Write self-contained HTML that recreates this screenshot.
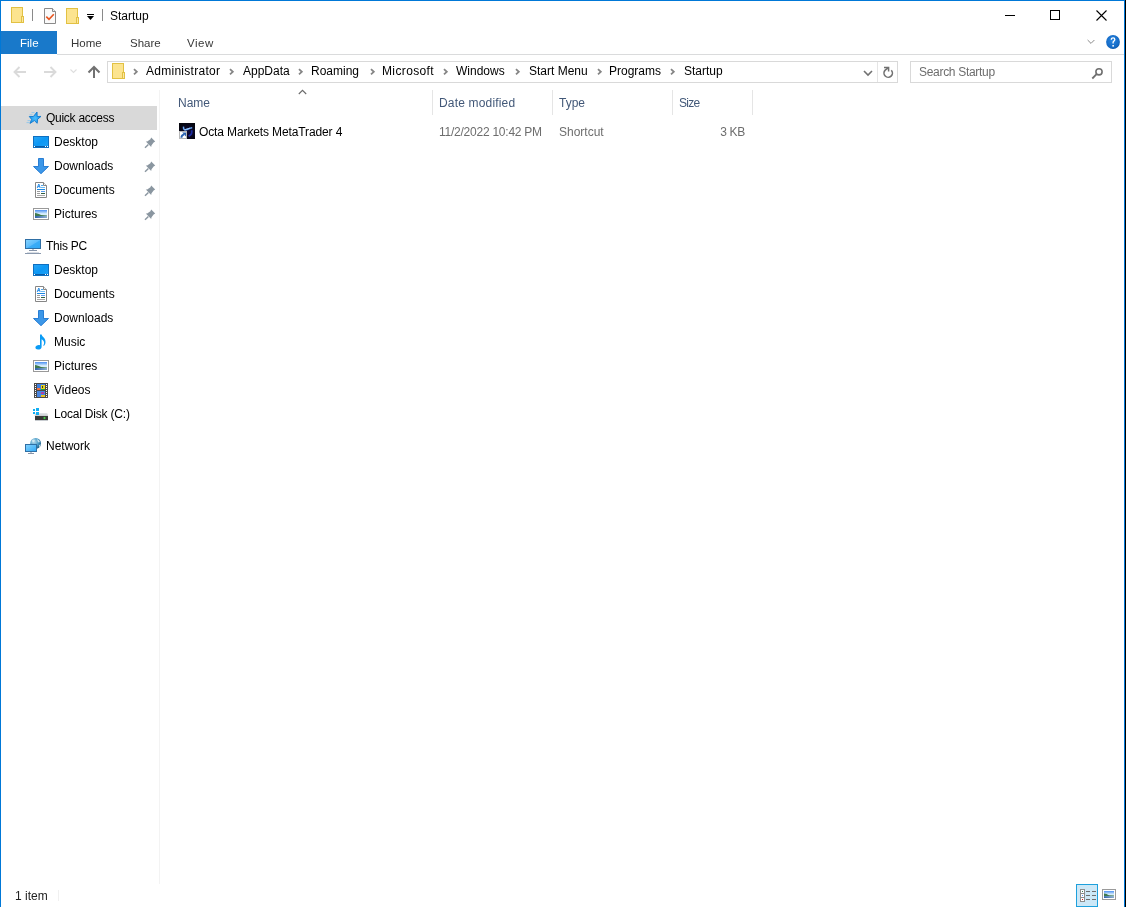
<!DOCTYPE html>
<html><head><meta charset="utf-8">
<style>
*{margin:0;padding:0;box-sizing:border-box}
html,body{width:1126px;height:907px;overflow:hidden;background:#fff}
body{position:relative;font-family:"Liberation Sans",sans-serif;font-size:12px;color:#000}
.a{position:absolute}
.t{position:absolute;white-space:nowrap;font-size:12px;line-height:14px;will-change:transform}
.s{font-size:11.5px}
svg{position:absolute;overflow:visible}
</style></head><body>
<!-- window borders -->
<div class="a" style="left:0;top:0;width:1125px;height:1px;background:#0078d7"></div>
<div class="a" style="left:0;top:0;width:1px;height:907px;background:#0078d7"></div>
<div class="a" style="left:1124px;top:0;width:1px;height:907px;background:#0078d7"></div>
<div class="a" style="left:1125px;top:0;width:1px;height:907px;background:#000"></div>

<!-- title bar -->
<div class="t" style="left:110px;top:9px">Startup</div>

<!-- ribbon tabs -->
<div class="a" style="left:1px;top:31px;width:56px;height:23px;background:#1979ca"></div>
<div class="t s" style="left:20px;top:36px;color:#fff">File</div>
<div class="t s" style="left:71px;top:36px;color:#383838">Home</div>
<div class="t s" style="left:130px;top:36px;color:#383838">Share</div>
<div class="t s" style="left:187px;top:36px;color:#383838;letter-spacing:0.5px">View</div>
<div class="a" style="left:57px;top:54px;width:1067px;height:1px;background:#dadbdc"></div>

<!-- address bar -->
<div class="a" style="left:107px;top:61px;width:791px;height:22px;border:1px solid #d9d9d9"></div>
<div class="a" style="left:877px;top:62px;width:1px;height:20px;background:#e5e5e5"></div>
<div class="t" style="left:146px;top:64px;letter-spacing:0.27px">Administrator</div>
<div class="t" style="left:243px;top:64px">AppData</div>
<div class="t" style="left:311px;top:64px">Roaming</div>
<div class="t" style="left:382px;top:64px;letter-spacing:0.37px">Microsoft</div>
<div class="t" style="left:456px;top:64px">Windows</div>
<div class="t" style="left:529px;top:64px">Start Menu</div>
<div class="t" style="left:609px;top:64px">Programs</div>
<div class="t" style="left:684px;top:64px">Startup</div>

<!-- search -->
<div class="a" style="left:910px;top:61px;width:202px;height:22px;border:1px solid #d9d9d9"></div>
<div class="t" style="left:919px;top:65px;color:#6d6d6d;letter-spacing:-0.3px">Search Startup</div>

<!-- sidebar -->
<div class="a" style="left:1px;top:106px;width:156px;height:24px;background:#d9d9d9"></div>
<div class="a" style="left:159px;top:90px;width:1px;height:794px;background:#f3f3f3"></div>
<div class="t" style="left:46px;top:111px;letter-spacing:-0.27px">Quick access</div>
<div class="t" style="left:54px;top:135px">Desktop</div>
<div class="t" style="left:54px;top:159px">Downloads</div>
<div class="t" style="left:54px;top:183px">Documents</div>
<div class="t" style="left:54px;top:207px">Pictures</div>
<div class="t" style="left:46px;top:239px;letter-spacing:-0.25px">This PC</div>
<div class="t" style="left:54px;top:263px">Desktop</div>
<div class="t" style="left:54px;top:287px">Documents</div>
<div class="t" style="left:54px;top:311px">Downloads</div>
<div class="t" style="left:54px;top:335px">Music</div>
<div class="t" style="left:54px;top:359px">Pictures</div>
<div class="t" style="left:54px;top:383px">Videos</div>
<div class="t" style="left:54px;top:407px;letter-spacing:-0.2px">Local Disk (C:)</div>
<div class="t" style="left:46px;top:439px">Network</div>

<!-- headers -->
<div class="t" style="left:178px;top:96px;color:#425878">Name</div>
<div class="t" style="left:439px;top:96px;color:#425878;letter-spacing:0.17px">Date modified</div>
<div class="t" style="left:559px;top:96px;color:#425878">Type</div>
<div class="t" style="left:679px;top:96px;color:#425878;letter-spacing:-0.75px">Size</div>
<div class="a" style="left:432px;top:90px;width:1px;height:25px;background:#e5e5e5"></div>
<div class="a" style="left:552px;top:90px;width:1px;height:25px;background:#e5e5e5"></div>
<div class="a" style="left:672px;top:90px;width:1px;height:25px;background:#e5e5e5"></div>
<div class="a" style="left:752px;top:90px;width:1px;height:25px;background:#e5e5e5"></div>

<!-- row -->
<div class="t" style="left:199px;top:125px;letter-spacing:-0.12px">Octa Markets MetaTrader 4</div>
<div class="t" style="left:439px;top:125px;color:#6d6d6d;letter-spacing:-0.24px">11/2/2022 10:42 PM</div>
<div class="t" style="left:559px;top:125px;color:#6d6d6d">Shortcut</div>
<div class="t" style="left:700px;top:125px;width:45px;text-align:right;color:#6d6d6d;letter-spacing:-0.3px">3 KB</div>

<!-- status -->
<div class="t" style="left:15px;top:889px;color:#222">1 item</div>
<div class="a" style="left:58px;top:890px;width:1px;height:11px;background:#f0f0f0"></div>

<!-- ===== ICONS ===== -->
<!-- title folder 1 -->
<svg class="ic" style="left:11px;top:7px" width="14" height="16" viewBox="0 0 14 16" shape-rendering="crispEdges">
<rect x="0.5" y="0.5" width="11" height="15" fill="#fce48f" stroke="#e2c143"/>
<rect x="10.5" y="9.5" width="2" height="6" fill="#fbe7a3" stroke="#e2c143"/>
</svg>
<div class="a" style="left:32px;top:9px;width:1px;height:12px;background:#8a8a8a"></div>
<!-- properties doc -->
<svg class="ic" style="left:44px;top:8px" width="13" height="16" viewBox="0 0 13 16">
<path d="M0.5 0.5 H8.5 L11.5 3.5 V15.5 H0.5 Z" fill="#fafafa" stroke="#8a8a8a" stroke-width="1"/>
<path d="M8.5 0.5 V3.5 H11.5" fill="#eee" stroke="#8a8a8a" stroke-width="1"/>
<path d="M2.3 8.6 L5 11.3 L9.8 6.2" fill="none" stroke="#e8541e" stroke-width="1.6"/>
</svg>
<!-- title folder 2 -->
<svg class="ic" style="left:66px;top:8px" width="14" height="16" viewBox="0 0 14 16" shape-rendering="crispEdges">
<rect x="0.5" y="0.5" width="11" height="15" fill="#fce48f" stroke="#e2c143"/>
<rect x="10.5" y="9.5" width="2" height="6" fill="#fbe7a3" stroke="#e2c143"/>
</svg>
<!-- qat dropdown -->
<div class="a" style="left:87px;top:14px;width:7px;height:1px;background:#000"></div>
<svg class="ic" style="left:87px;top:16px" width="7" height="4" viewBox="0 0 7 4"><path d="M0 0 H7 L3.5 4 Z" fill="#000"/></svg>
<div class="a" style="left:102px;top:9px;width:1px;height:12px;background:#8a8a8a"></div>

<!-- window controls -->
<div class="a" style="left:1005px;top:15px;width:10px;height:1px;background:#000"></div>
<div class="a" style="left:1050px;top:10px;width:10px;height:10px;border:1px solid #000"></div>
<svg class="ic" style="left:1096px;top:10px" width="11" height="11" viewBox="0 0 11 11"><path d="M0.5 0.5 L10.5 10.5 M10.5 0.5 L0.5 10.5" stroke="#000" stroke-width="1.1" fill="none"/></svg>

<!-- ribbon right -->
<svg class="ic" style="left:1087px;top:39px" width="9" height="6" viewBox="0 0 9 6"><path d="M0.6 1 L4 4.4 L7.4 1" stroke="#8a8a8a" stroke-width="1" fill="none"/></svg>
<svg class="ic" style="left:1106px;top:35px" width="14" height="14" viewBox="0 0 14 14">
<defs><radialGradient id="hg" cx="0.45" cy="0.4" r="0.6"><stop offset="0" stop-color="#2b86e0"/><stop offset="0.85" stop-color="#1268c4"/><stop offset="1" stop-color="#0b55a6"/></radialGradient></defs>
<circle cx="7" cy="7" r="6.9" fill="url(#hg)"/>
<path d="M5.3 4.7 C5.3 3.5 6.1 2.9 7.1 2.9 C8.1 2.9 8.8 3.6 8.8 4.5 C8.8 5.7 7.4 6 7.1 7.2 V8.4" stroke="#fff" stroke-width="1.3" fill="none"/>
<rect x="6.4" y="10" width="1.5" height="1.6" fill="#fff"/>
</svg>

<!-- nav arrows -->
<svg class="ic" style="left:13px;top:66px" width="14" height="12" viewBox="0 0 14 12"><path d="M13 6 H2 M6.5 1 L1.5 6 L6.5 11" stroke="#dadada" stroke-width="1.9" fill="none"/></svg>
<svg class="ic" style="left:43px;top:66px" width="14" height="12" viewBox="0 0 14 12"><path d="M1 6 H12 M7.5 1 L12.5 6 L7.5 11" stroke="#dadada" stroke-width="1.9" fill="none"/></svg>
<svg class="ic" style="left:70px;top:69px" width="7" height="5" viewBox="0 0 7 5"><path d="M0.5 0.5 L3.5 3.5 L6.5 0.5" stroke="#dedede" stroke-width="1.1" fill="none"/></svg>
<svg class="ic" style="left:87px;top:65px" width="14" height="14" viewBox="0 0 14 14"><path d="M7 2 V13 M1.5 7.5 L7 2 L12.5 7.5" stroke="#717171" stroke-width="2" fill="none"/></svg>

<!-- address folder -->
<svg class="ic" style="left:112px;top:63px" width="14" height="16" viewBox="0 0 14 16" shape-rendering="crispEdges">
<rect x="0.5" y="0.5" width="11" height="15" fill="#fce48f" stroke="#e2c143"/>
<rect x="10.5" y="9.5" width="2" height="6" fill="#fbe7a3" stroke="#e2c143"/>
</svg>
<svg class="ic" style="left:133px;top:68px" width="6" height="8" viewBox="0 0 6 8"><path d="M1 1.2 L3.8 3.8 L1 6.4" stroke="#858585" stroke-width="1.8" fill="none"/></svg>
<svg class="ic" style="left:229px;top:68px" width="6" height="8" viewBox="0 0 6 8"><path d="M1 1.2 L3.8 3.8 L1 6.4" stroke="#858585" stroke-width="1.8" fill="none"/></svg>
<svg class="ic" style="left:298px;top:68px" width="6" height="8" viewBox="0 0 6 8"><path d="M1 1.2 L3.8 3.8 L1 6.4" stroke="#858585" stroke-width="1.8" fill="none"/></svg>
<svg class="ic" style="left:370px;top:68px" width="6" height="8" viewBox="0 0 6 8"><path d="M1 1.2 L3.8 3.8 L1 6.4" stroke="#858585" stroke-width="1.8" fill="none"/></svg>
<svg class="ic" style="left:443px;top:68px" width="6" height="8" viewBox="0 0 6 8"><path d="M1 1.2 L3.8 3.8 L1 6.4" stroke="#858585" stroke-width="1.8" fill="none"/></svg>
<svg class="ic" style="left:515px;top:68px" width="6" height="8" viewBox="0 0 6 8"><path d="M1 1.2 L3.8 3.8 L1 6.4" stroke="#858585" stroke-width="1.8" fill="none"/></svg>
<svg class="ic" style="left:597px;top:68px" width="6" height="8" viewBox="0 0 6 8"><path d="M1 1.2 L3.8 3.8 L1 6.4" stroke="#858585" stroke-width="1.8" fill="none"/></svg>
<svg class="ic" style="left:670px;top:68px" width="6" height="8" viewBox="0 0 6 8"><path d="M1 1.2 L3.8 3.8 L1 6.4" stroke="#858585" stroke-width="1.8" fill="none"/></svg>

<!-- addr dropdown + refresh -->
<svg class="ic" style="left:863px;top:70px" width="10" height="7" viewBox="0 0 10 7"><path d="M1 1 L5 5 L9 1" stroke="#717171" stroke-width="1.6" fill="none"/></svg>
<svg class="ic" style="left:882px;top:66px" width="12" height="13" viewBox="0 0 12 13">
<path d="M9.3 4.2 A4.2 4.2 0 1 1 3.2 4.1 L6.4 1.6" stroke="#717171" stroke-width="1.6" fill="none"/>
<path d="M2 1.5 H6.6 V5.6" stroke="#717171" stroke-width="1.5" fill="none"/>
</svg>
<!-- search icon -->
<svg class="ic" style="left:1090px;top:67px" width="14" height="14" viewBox="0 0 14 14">
<circle cx="9" cy="4.8" r="3.1" stroke="#6f6f6f" stroke-width="1.6" fill="none"/>
<path d="M6.6 7.2 L2.3 11.5" stroke="#6f6f6f" stroke-width="1.8" fill="none"/>
</svg>

<!-- ===== SIDEBAR ICONS ===== -->
<!-- quick access star -->
<svg class="ic" style="left:25px;top:110px" width="18" height="16" viewBox="0 0 18 16">
<path d="M1.5 12.6 H4.5 M2.5 10.6 H5.2 M4.5 4.8 H7.5 M6.5 2.6 H9.5" stroke="#7cc0f0" stroke-width="0.9" fill="none" opacity="0.8"/>
<defs><radialGradient id="stg" cx="0.5" cy="0.55" r="0.5"><stop offset="0" stop-color="#4cbcfb"/><stop offset="1" stop-color="#1a98ec"/></radialGradient></defs>
<path d="M12 2 L12.2 6.6 L16 6.4 L12.6 9.2 L12.2 13.3 L9.4 10.6 L5 13.4 L6.6 9.4 L4.3 6.5 L8.4 6.5 Z" fill="url(#stg)" stroke="#0d78cf" stroke-width="0.9" stroke-linejoin="round"/>
</svg>
<svg class="ic" style="left:33px;top:136px" width="16" height="12" viewBox="0 0 16 12" shape-rendering="crispEdges">
<defs><linearGradient id="dg136" x1="0" y1="0" x2="1" y2="1"><stop offset="0" stop-color="#2aa6f6"/><stop offset="0.5" stop-color="#0c97f4"/><stop offset="1" stop-color="#22a2f5"/></linearGradient></defs>
<rect x="0.5" y="0.5" width="15" height="11" fill="url(#dg136)" stroke="#0f6fc0"/>
<rect x="1" y="10" width="14" height="1" fill="#0a5ca6"/>
<rect x="1" y="10" width="1" height="1" fill="#fff"/><rect x="12" y="10" width="1" height="1" fill="#fff"/><rect x="14" y="10" width="1" height="1" fill="#fff"/>
</svg>
<svg class="ic" style="left:33px;top:158px" width="16" height="16" viewBox="0 0 16 16">
<path d="M5.5 0.5 H10.5 V8.5 H15.5 L8 15.7 L0.5 8.5 H5.5 Z" fill="#3c97e8" stroke="#1c75d0" stroke-width="0.9" stroke-linejoin="miter"/>
</svg>
<svg class="ic" style="left:35px;top:182px" width="12" height="16" viewBox="0 0 12 16">
<path d="M0.5 0.5 H8.5 L11.5 3.5 V15.5 H0.5 Z" fill="#fff" stroke="#868686"/>
<path d="M8.5 0.5 V3.5 H11.5" fill="#f4f4f4" stroke="#868686"/>
<path d="M2.2 6 L3.8 2 L5.2 6 M2.8 4.6 H4.8" stroke="#2a8ee8" stroke-width="1" fill="none"/>
<rect x="6" y="3" width="2" height="1" fill="#4aa6f0"/>
<rect x="6" y="5" width="4" height="1" fill="#6cbcf4"/>
<rect x="2" y="7" width="8" height="1" fill="#1d87e0"/>
<rect x="2" y="9" width="3" height="1" fill="#9a9a9a"/><rect x="2" y="11" width="3" height="1" fill="#9a9a9a"/>
<rect x="6" y="9" width="4" height="1" fill="#5a9cf0"/><rect x="6" y="11" width="4" height="1" fill="#2f5f3f"/>
<rect x="2" y="13" width="8" height="1" fill="#a8a8a8"/>
</svg>
<svg class="ic" style="left:33px;top:208px" width="16" height="12" viewBox="0 0 16 12">
<defs><linearGradient id="sk208" x1="0" y1="0" x2="0" y2="1"><stop offset="0" stop-color="#4a8ff2"/><stop offset="0.45" stop-color="#d4ebfb"/><stop offset="1" stop-color="#e8f4fc"/></linearGradient>
<linearGradient id="wt208" x1="0" y1="0" x2="1" y2="0"><stop offset="0" stop-color="#2f62a8"/><stop offset="1" stop-color="#8fb0d0"/></linearGradient></defs>
<rect x="0.5" y="0.5" width="15" height="11" fill="#fff" stroke="#999" shape-rendering="crispEdges"/>
<rect x="2" y="2" width="12" height="8" fill="url(#sk208)"/>
<path d="M2 5 C4 5 6 6 8 7 L14 7.4 V8 H2 Z" fill="#3f7a4f"/>
<rect x="2" y="8" width="12" height="2" fill="url(#wt208)"/>
</svg>
<svg class="ic" style="left:144px;top:137px" width="12" height="12" viewBox="0 0 12 12">
<path d="M7.2 0.6 L11.2 4.6 L9.6 5.4 L7.4 8.6 L7.2 10 L1.8 4.6 L3.2 4.4 L6.4 2.2 Z" fill="#8a96a0"/>
<path d="M4.4 7.4 L1 10.8" stroke="#8a96a0" stroke-width="1.4"/>
</svg>
<svg class="ic" style="left:144px;top:161px" width="12" height="12" viewBox="0 0 12 12">
<path d="M7.2 0.6 L11.2 4.6 L9.6 5.4 L7.4 8.6 L7.2 10 L1.8 4.6 L3.2 4.4 L6.4 2.2 Z" fill="#8a96a0"/>
<path d="M4.4 7.4 L1 10.8" stroke="#8a96a0" stroke-width="1.4"/>
</svg>
<svg class="ic" style="left:144px;top:185px" width="12" height="12" viewBox="0 0 12 12">
<path d="M7.2 0.6 L11.2 4.6 L9.6 5.4 L7.4 8.6 L7.2 10 L1.8 4.6 L3.2 4.4 L6.4 2.2 Z" fill="#8a96a0"/>
<path d="M4.4 7.4 L1 10.8" stroke="#8a96a0" stroke-width="1.4"/>
</svg>
<svg class="ic" style="left:144px;top:209px" width="12" height="12" viewBox="0 0 12 12">
<path d="M7.2 0.6 L11.2 4.6 L9.6 5.4 L7.4 8.6 L7.2 10 L1.8 4.6 L3.2 4.4 L6.4 2.2 Z" fill="#8a96a0"/>
<path d="M4.4 7.4 L1 10.8" stroke="#8a96a0" stroke-width="1.4"/>
</svg>

<!-- This PC -->
<svg class="ic" style="left:25px;top:239px" width="16" height="16" viewBox="0 0 16 16" shape-rendering="crispEdges">
<defs><linearGradient id="pcg" x1="0" y1="0" x2="1" y2="1"><stop offset="0" stop-color="#86d4ff"/><stop offset="0.5" stop-color="#5ebcfb"/><stop offset="0.55" stop-color="#3aacf7"/><stop offset="1" stop-color="#30a8f5"/></linearGradient></defs>
<rect x="0.5" y="0.5" width="15" height="9" fill="url(#pcg)" stroke="#2f6fa5"/>
<rect x="7" y="10" width="2" height="1" fill="#b8c4d0"/>
<rect x="4" y="11" width="8" height="1" fill="#8795aa"/>
<rect x="0" y="14" width="16" height="1" fill="#8a99ae"/>
<rect x="2" y="13" width="12" height="1" fill="#d8dde4"/>
</svg>
<svg class="ic" style="left:33px;top:264px" width="16" height="12" viewBox="0 0 16 12" shape-rendering="crispEdges">
<defs><linearGradient id="dg264" x1="0" y1="0" x2="1" y2="1"><stop offset="0" stop-color="#2aa6f6"/><stop offset="0.5" stop-color="#0c97f4"/><stop offset="1" stop-color="#22a2f5"/></linearGradient></defs>
<rect x="0.5" y="0.5" width="15" height="11" fill="url(#dg264)" stroke="#0f6fc0"/>
<rect x="1" y="10" width="14" height="1" fill="#0a5ca6"/>
<rect x="1" y="10" width="1" height="1" fill="#fff"/><rect x="12" y="10" width="1" height="1" fill="#fff"/><rect x="14" y="10" width="1" height="1" fill="#fff"/>
</svg>
<svg class="ic" style="left:35px;top:286px" width="12" height="16" viewBox="0 0 12 16">
<path d="M0.5 0.5 H8.5 L11.5 3.5 V15.5 H0.5 Z" fill="#fff" stroke="#868686"/>
<path d="M8.5 0.5 V3.5 H11.5" fill="#f4f4f4" stroke="#868686"/>
<path d="M2.2 6 L3.8 2 L5.2 6 M2.8 4.6 H4.8" stroke="#2a8ee8" stroke-width="1" fill="none"/>
<rect x="6" y="3" width="2" height="1" fill="#4aa6f0"/>
<rect x="6" y="5" width="4" height="1" fill="#6cbcf4"/>
<rect x="2" y="7" width="8" height="1" fill="#1d87e0"/>
<rect x="2" y="9" width="3" height="1" fill="#9a9a9a"/><rect x="2" y="11" width="3" height="1" fill="#9a9a9a"/>
<rect x="6" y="9" width="4" height="1" fill="#5a9cf0"/><rect x="6" y="11" width="4" height="1" fill="#2f5f3f"/>
<rect x="2" y="13" width="8" height="1" fill="#a8a8a8"/>
</svg>
<svg class="ic" style="left:33px;top:310px" width="16" height="16" viewBox="0 0 16 16">
<path d="M5.5 0.5 H10.5 V8.5 H15.5 L8 15.7 L0.5 8.5 H5.5 Z" fill="#3c97e8" stroke="#1c75d0" stroke-width="0.9" stroke-linejoin="miter"/>
</svg>

<!-- Music -->
<svg class="ic" style="left:35px;top:334px" width="11" height="16" viewBox="0 0 11 16">
<path d="M5 0.5 H6.6 L7.2 2 C9 3.6 10.5 5 10.5 8 C10.5 10 9.6 11.5 8.6 12 L8.4 11.2 C9.2 10.2 9.3 9 8.9 7.8 C8.5 6.6 7.6 5.8 6.6 5.2 V13 C6.6 14.6 5 15.6 3 15.6 C1.4 15.6 0.4 14.8 0.4 13.6 C0.4 12 2.2 11 3.8 11 C4.2 11 4.6 11.1 5 11.2 Z" fill="#0a9bf5"/>
</svg>
<svg class="ic" style="left:33px;top:360px" width="16" height="12" viewBox="0 0 16 12">
<defs><linearGradient id="sk360" x1="0" y1="0" x2="0" y2="1"><stop offset="0" stop-color="#4a8ff2"/><stop offset="0.45" stop-color="#d4ebfb"/><stop offset="1" stop-color="#e8f4fc"/></linearGradient>
<linearGradient id="wt360" x1="0" y1="0" x2="1" y2="0"><stop offset="0" stop-color="#2f62a8"/><stop offset="1" stop-color="#8fb0d0"/></linearGradient></defs>
<rect x="0.5" y="0.5" width="15" height="11" fill="#fff" stroke="#999" shape-rendering="crispEdges"/>
<rect x="2" y="2" width="12" height="8" fill="url(#sk360)"/>
<path d="M2 5 C4 5 6 6 8 7 L14 7.4 V8 H2 Z" fill="#3f7a4f"/>
<rect x="2" y="8" width="12" height="2" fill="url(#wt360)"/>
</svg>

<!-- Videos -->
<svg class="ic" style="left:34px;top:383px" width="14" height="15" viewBox="0 0 14 15" shape-rendering="crispEdges">
<rect x="0" y="0" width="14" height="15" fill="#4a4a4a"/>
<rect x="1" y="1" width="1" height="1" fill="#fff"/><rect x="1" y="3" width="1" height="1" fill="#fff"/><rect x="1" y="5" width="1" height="1" fill="#fff"/><rect x="1" y="7" width="1" height="1" fill="#fff"/><rect x="1" y="9" width="1" height="1" fill="#fff"/><rect x="1" y="11" width="1" height="1" fill="#fff"/><rect x="1" y="13" width="1" height="1" fill="#fff"/>
<rect x="12" y="1" width="1" height="1" fill="#fff"/><rect x="12" y="3" width="1" height="1" fill="#fff"/><rect x="12" y="5" width="1" height="1" fill="#fff"/><rect x="12" y="7" width="1" height="1" fill="#fff"/><rect x="12" y="9" width="1" height="1" fill="#fff"/><rect x="12" y="11" width="1" height="1" fill="#fff"/><rect x="12" y="13" width="1" height="1" fill="#fff"/>
<rect x="3" y="1" width="8" height="6" fill="#3d7fe0"/>
<rect x="3" y="8" width="8" height="6" fill="#4a86e0"/>
<rect x="7" y="2" width="4" height="4" fill="#e8d020"/><rect x="8" y="3" width="1" height="2" fill="#333"/>
<rect x="3" y="5" width="3" height="2" fill="#f07040"/><rect x="7" y="6" width="4" height="1" fill="#20a040"/>
<rect x="7" y="9" width="3" height="2" fill="#b040a0"/><rect x="7" y="12" width="4" height="2" fill="#e8c020"/>
</svg>
<!-- Local disk -->
<svg class="ic" style="left:33px;top:408px" width="16" height="14" viewBox="0 0 16 14">
<defs><linearGradient id="dtop" x1="0" y1="0" x2="0" y2="1"><stop offset="0" stop-color="#e4e6ea"/><stop offset="1" stop-color="#c8ccd0"/></linearGradient></defs>
<path d="M3 5 H13.4 Q14.6 5 14.8 6.4 L15 8 H1.6 L1.8 6.4 Q2 5 3 5 Z" fill="url(#dtop)"/>
<rect x="2" y="8" width="13" height="4" fill="#383838" shape-rendering="crispEdges"/>
<rect x="2" y="12" width="13" height="1" fill="#c8ccd0" shape-rendering="crispEdges"/>
<circle cx="11.5" cy="10" r="1.3" fill="#40e840" opacity="0.55"/>
<rect x="11" y="9.5" width="1" height="1" fill="#50ff50"/>
<g shape-rendering="crispEdges" fill="#12aef2">
<rect x="0" y="1" width="2" height="2"/><rect x="3" y="0" width="3" height="3"/>
<rect x="0" y="4" width="2" height="2"/><rect x="3" y="4" width="3" height="3"/>
</g>
</svg>
<!-- Network -->
<svg class="ic" style="left:25px;top:438px" width="16" height="16" viewBox="0 0 16 16">
<defs><radialGradient id="glb" cx="0.35" cy="0.35" r="0.7"><stop offset="0" stop-color="#b8dcec"/><stop offset="0.6" stop-color="#4a9cc8"/><stop offset="1" stop-color="#1f5f88"/></radialGradient>
<linearGradient id="ng" x1="0" y1="0" x2="1" y2="1"><stop offset="0" stop-color="#86d4ff"/><stop offset="1" stop-color="#30a8f5"/></linearGradient></defs>
<circle cx="10.6" cy="5.4" r="5.4" fill="url(#glb)"/>
<path d="M7 2 Q9 0.8 10 2 L9 4 L7.5 4.5 Z M12 1 Q14.5 2 15 4 L13.5 4.5 L12.5 3 Z M14 7 L15.6 6.5 Q15.2 8.5 14 9.5 Z" fill="#d8ecf4" opacity="0.85"/>
<rect x="0.5" y="6.5" width="11" height="7" fill="url(#ng)" stroke="#2f6fa5" shape-rendering="crispEdges"/>
<rect x="3" y="15" width="6" height="1" fill="#8795aa" shape-rendering="crispEdges"/>
<rect x="5" y="14" width="2" height="1" fill="#c0c8d4" shape-rendering="crispEdges"/>
</svg>

<!-- sort arrow -->
<svg class="ic" style="left:298px;top:89px" width="10" height="6" viewBox="0 0 10 6"><path d="M0.8 5 L4.5 1.3 L8.2 5" stroke="#6a6a6a" stroke-width="1.1" fill="none"/></svg>

<!-- shortcut icon -->
<svg class="ic" style="left:179px;top:123px" width="16" height="16" viewBox="0 0 16 16">
<defs><radialGradient id="sg" cx="0.55" cy="0.55" r="0.6"><stop offset="0" stop-color="#0c0a3a"/><stop offset="1" stop-color="#06060e"/></radialGradient>
<filter id="glw" x="-50%" y="-50%" width="200%" height="200%"><feGaussianBlur stdDeviation="0.5"/></filter></defs>
<rect x="0" y="0" width="16" height="16" fill="url(#sg)"/>
<path d="M12.6 7.2 C13.2 9.6 12.4 12 9.6 13.2" stroke="#2436c0" stroke-width="1.8" fill="none" filter="url(#glw)" opacity="0.8"/>
<path d="M4.6 3.6 C4.2 5.6 5 7.4 7 6.8 C9 6.2 11 5 13.2 4.8" stroke="#6aaaf6" stroke-width="1.5" fill="none" filter="url(#glw)"/>
<path d="M5.5 6.8 C7.5 6.2 9 5.6 11 5.1" stroke="#9cc8ff" stroke-width="0.9" fill="none"/>
<rect x="0.5" y="8.5" width="7" height="7" fill="#fff" stroke="#b8b8b8" shape-rendering="crispEdges"/>
<path d="M2.4 14.8 C2.4 13.2 3.2 12 5 11.4" stroke="#2a62b0" stroke-width="1.9" fill="none"/>
<path d="M3.2 9.6 H7 V13.4 Z" fill="#2a62b0"/>
</svg>
<!-- status bar view buttons -->
<div class="a" style="left:1076px;top:884px;width:22px;height:23px;background:#cde8f7;border:1px solid #1ea0dc"></div>
<svg class="ic" style="left:1080px;top:889px" width="16" height="13" viewBox="0 0 16 13" shape-rendering="crispEdges">
<rect x="0" y="0" width="5" height="13" fill="#8e8e8e"/>
<rect x="1" y="1" width="3" height="3" fill="#fff"/><rect x="1" y="5" width="3" height="3" fill="#fff"/><rect x="1" y="9" width="3" height="3" fill="#fff"/>
<rect x="2" y="2" width="1" height="1" fill="#3b7a57"/><rect x="2" y="6" width="1" height="1" fill="#5b9bff"/><rect x="2" y="10" width="1" height="1" fill="#d81b1b"/>
<rect x="6" y="2" width="4" height="1" fill="#6e6e6e"/><rect x="12" y="2" width="4" height="1" fill="#6e6e6e"/>
<rect x="6" y="6" width="4" height="1" fill="#6e6e6e"/><rect x="12" y="6" width="4" height="1" fill="#6e6e6e"/>
<rect x="6" y="10" width="4" height="1" fill="#6e6e6e"/><rect x="12" y="10" width="4" height="1" fill="#6e6e6e"/>
</svg>
<svg class="ic" style="left:1102px;top:889px" width="14" height="11" viewBox="0 0 14 11">
<defs><linearGradient id="sk2" x1="0" y1="0" x2="0" y2="1"><stop offset="0" stop-color="#4a8ff2"/><stop offset="0.45" stop-color="#d4ebfb"/><stop offset="1" stop-color="#e8f4fc"/></linearGradient>
<linearGradient id="wt2" x1="0" y1="0" x2="1" y2="0"><stop offset="0" stop-color="#2f62a8"/><stop offset="1" stop-color="#8fb0d0"/></linearGradient></defs>
<rect x="0.5" y="0.5" width="13" height="10" fill="#fff" stroke="#9a9a9a" shape-rendering="crispEdges"/>
<rect x="2" y="2" width="10" height="7" fill="url(#sk2)"/>
<path d="M2 4.4 C4 4.4 5.5 5.4 7 6.2 L12 6.6 V7.2 H2 Z" fill="#3f7a4f"/>
<rect x="2" y="7.2" width="10" height="1.8" fill="url(#wt2)"/>
</svg>
</body></html>
